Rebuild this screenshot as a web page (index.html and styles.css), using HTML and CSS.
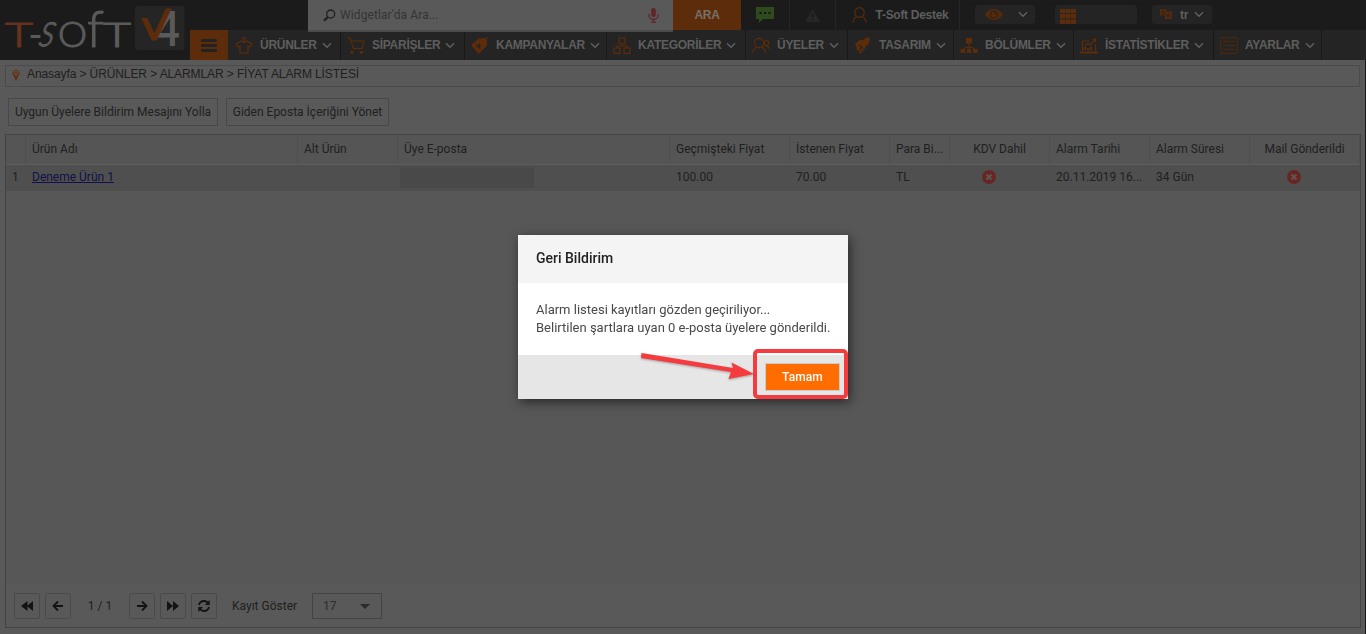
FILE: index.html
```html
<!DOCTYPE html>
<html lang="tr">
<head>
<meta charset="utf-8">
<title>Fiyat Alarm Listesi</title>
<link rel="stylesheet" href="styles.css">
</head>
<body>
<svg class="defs" width="0" height="0" aria-hidden="true">
  <symbol id="chev" viewBox="0 0 10 7"><path d="M1 1.3 5 5.3 9 1.3" fill="none" stroke="#606060" stroke-width="1.4"/></symbol>
  <symbol id="fail" viewBox="0 0 14 14"><circle cx="7" cy="7" r="6.9" fill="#682521"/><path d="M4.5 4.5 9.5 9.5M9.5 4.5 4.5 9.5" stroke="#5b5654" stroke-width="2.3"/></symbol>
</svg>
<header class="header">
  <div class="brand">
    <svg class="logo" width="190" height="60" viewBox="0 0 190 60">
      <g class="word">
        <text x="5" y="47" textLength="28" lengthAdjust="spacingAndGlyphs" font-size="34" class="warm">T</text>
        <text x="29" y="47" font-size="35" textLength="13" lengthAdjust="spacingAndGlyphs" class="dash">-</text>
        <text x="48" y="46.500" font-size="47" textLength="15" lengthAdjust="spacingAndGlyphs" font-style="italic" transform="skewX(-12)">s</text>
        <text x="58" y="47" font-size="35" textLength="29" lengthAdjust="spacingAndGlyphs">O</text>
        <text x="87" y="47" font-size="51" textLength="17" lengthAdjust="spacingAndGlyphs">f</text>
        <text x="103" y="47" font-size="34" textLength="28" lengthAdjust="spacingAndGlyphs">T</text>
      </g>
      <rect x="135" y="6" width="49.500" height="44" rx="3" fill="#252525"/>
      <clipPath id="tick"><path d="M135 18h19V6h30v44h-49z"/></clipPath>
      <g class="mark">
        <text x="154" y="45.500" font-size="48" textLength="26" lengthAdjust="spacingAndGlyphs">4</text>
        <text x="137" y="40" font-size="42" textLength="34" lengthAdjust="spacingAndGlyphs" class="warm2" clip-path="url(#tick)">V</text>
      </g>
    </svg>
    <div class="burger"><i></i><i></i><i></i></div>
  </div>
  <div class="bars">
    <div class="topbar">
      <div class="search">
        <svg width="13" height="13" viewBox="0 0 13 13"><circle cx="7.700" cy="5" r="4" fill="none" stroke="#202020" stroke-width="1.300"/><path d="M4.800 8 1 11.800" stroke="#202020" stroke-width="2.200"/></svg>
        <span>Widgetlar'da Ara...</span>
        <svg width="11" height="15" viewBox="0 0 11 15"><rect x="3.200" width="4.600" height="9" rx="2.300" fill="#5f2527"/><path d="M1 6v1.500a4.500 3.800 0 0 0 9 0V6M5.500 11.300V14M3 14.200h5" fill="none" stroke="#5f2527" stroke-width="1.200"/></svg>
      </div>
      <div class="go">ARA</div>
      <div class="cell chat"><svg width="18" height="16" viewBox="0 0 18 16"><path d="M0 0h18v12H7l-4 4v-4H0z" fill="#2f4a1f"/><path d="M3.500 6h2M8 6h2M12.500 6h2" stroke="#111" stroke-width="2"/></svg></div>
      <div class="cell warn"><svg width="15" height="13" viewBox="0 0 15 13"><path d="M7.500 0 15 13H0z" fill="#272727"/><path d="M7.500 4v4.500M7.500 9.700v1.800" stroke="#1b1b1b" stroke-width="1.700"/></svg></div>
      <div class="cell user"><svg width="15" height="16" viewBox="0 0 15 16" fill="none" stroke="#5c2c0b" stroke-width="1.200"><circle cx="7.500" cy="5.500" r="4.800"/><path d="M1 15.500c.2-3.300 1.700-5 4-5.700M14 15.500c-.2-3.300-1.700-5-4-5.700"/></svg><b>T-Soft Destek</b></div>
      <div class="pill eye"><svg width="18" height="11" viewBox="0 0 18 11"><path d="M0 5.500C5-1.800 13-1.800 18 5.500 13 12.800 5 12.800 0 5.500z" fill="#56290b"/><circle cx="9" cy="5.500" r="3.600" fill="none" stroke="#222" stroke-width="1"/><path d="M9 3.500a2 2 0 0 1 2 2" stroke="#222" fill="none"/></svg><svg width="10" height="7"><use href="#chev"/></svg></div>
      <div class="pill grid"><svg width="16" height="15" viewBox="0 0 16 15" fill="#5c2c0b"><path d="M0 0h5v4H0zM5.500 0h5v4h-5zM11 0h5v4h-5zM0 5h5v4.500H0zM5.500 5h5v4.500h-5zM11 5h5v4.500h-5zM0 10.500h5V15H0zM5.500 10.500h5V15h-5zM11 10.500h5V15h-5z"/></svg></div>
      <div class="pill lang"><svg width="12" height="11" viewBox="0 0 12 11"><path d="M0 0h6.500v2.500H12V10H5V6.500H0z" fill="#56290b"/><path d="M2 1.700h2M2 3.200h2M2 4.800h2M7 8.300l1.500-4 1.500 4M7.500 7h2M5 2.500v4" fill="none" stroke="#242424" stroke-width=".8"/></svg><b>tr</b><svg width="10" height="7"><use href="#chev"/></svg></div>
    </div>
    <nav class="nav">
      <a><svg viewBox="0 0 18 17"><path d="M6 4 1 7l1.500 3L5 9v7h8V9l2.500 1L17 7l-5-3-3 1.500L6 4zM9 5V3.300C11 2.500 10.500.7 9 .7S7.500 1.700 7.500 2"/></svg><span>ÜRÜNLER</span><svg class="c"><use href="#chev"/></svg></a>
      <a><svg viewBox="0 0 18 17"><path d="M0 1h3l3.500 10.500H15L17 4H5"/><circle class="f" cx="5" cy="15.300" r="1.600"/><circle class="f" cx="14.500" cy="15.300" r="1.600"/></svg><span>SİPARİŞLER</span><svg class="c"><use href="#chev"/></svg></a>
      <a><svg viewBox="0 0 18 17"><path class="f" d="M0 8 7.500 1.500 14 1l2 2-.2 6L7.500 16.700z"/><path d="M12 5c1-3 3-4 5.500-4.500"/><path class="k" d="m5.500 7.500 4 4M8.500 6.500v5M5.500 10l4-2"/></svg><span>KAMPANYALAR</span><svg class="c"><use href="#chev"/></svg></a>
      <a><svg viewBox="0 0 18 17"><path d="M6 1h6v5.500H6zM1 11h6v5.300H1zM11 11h6v5.300h-6zM9 6.500V9M4 11V9h10v2"/></svg><span>KATEGORİLER</span><svg class="c"><use href="#chev"/></svg></a>
      <a><svg viewBox="0 0 18 17"><circle cx="7" cy="6" r="4.700"/><path d="M.7 15.500c.2-3 1.700-4.500 3.500-5.200M13.500 15.500c-.2-3-1.700-4.500-3.500-5.200"/><circle cx="14.500" cy="6" r="2.300"/><path d="M14 9.500c2-.5 3.300.7 3.500 2.500"/></svg><span>ÜYELER</span><svg class="c"><use href="#chev"/></svg></a>
      <a><svg viewBox="0 0 18 17"><path class="f" d="M1 7 6 2.500l2.500 1L13 0l3 1-1 5-3 3-1 2.500-5 5.500-1-3.500L2 13l1-2z"/><path class="k" d="m5 8 4 3.500M5.500 11l2 2.500"/></svg><span>TASARIM</span><svg class="c"><use href="#chev"/></svg></a>
      <a><svg viewBox="0 0 18 17"><path class="f" d="M6 1h6v5.500H6zM.5 12h4.500v4H.5zM6.800 12h4.500v4H6.800zM13 12h4.500v4H13z"/><path d="M9 6v6M3 12.500 6 10.500h6l3 2"/></svg><span>BÖLÜMLER</span><svg class="c"><use href="#chev"/></svg></a>
      <a><svg viewBox="0 0 18 17"><path d="M2.500 14V4h7M15.500 7v7M5 9l3-3 2 2 5-5M12.500 2.500 15.500 2v3"/><path class="f" d="M4 13v-3h2v3zM7 13v-2h2v3zM10 13V9.500h2V13zM0 14.500h18v2H0z"/></svg><span>İSTATİSTİKLER</span><svg class="c"><use href="#chev"/></svg></a>
      <a class="dim"><svg viewBox="0 0 18 17"><rect x=".7" y=".7" width="16.500" height="15.700" rx="1"/><path d="M3 4.500h12M3 8.500h12M3 12.500h12M6 3v3M12 7v3M6 11v3"/></svg><span>AYARLAR</span><svg class="c"><use href="#chev"/></svg></a>
    </nav>
  </div>
</header>
<main class="page">
  <div class="crumbs"><svg width="8" height="13" viewBox="0 0 8 13"><path d="M4 12.500 1.800 7a3.500 3.500 0 1 1 4.400 0z" fill="#65300f"/><circle cx="4" cy="4" r="2.200" fill="#595959"/><circle cx="4" cy="4" r="1.100" fill="#65300f"/></svg><span>Anasayfa &gt; ÜRÜNLER &gt; ALARMLAR &gt; FİYAT ALARM LİSTESİ</span></div>
  <div class="actions"><button class="b1">Uygun Üyelere Bildirim Mesajını Yolla</button><button class="b2">Giden Eposta İçeriğini Yönet</button></div>
  <section class="panel">
    <div class="row head"><span></span><span>Ürün Adı</span><span>Alt Ürün</span><span>Üye E-posta</span><span>Geçmişteki Fiyat</span><span>İstenen Fiyat</span><span>Para Bi...</span><span class="mid">KDV Dahil</span><span>Alarm Tarihi</span><span>Alarm Süresi</span><span class="mid">Mail Gönderildi</span></div>
    <div class="row data"><span>1</span><span><a class="link">Deneme Ürün 1</a></span><span></span><span class="mail"><i class="redacted"></i></span><span>100.00</span><span>70.00</span><span>TL</span><span class="x1"><svg width="14" height="14"><use href="#fail"/></svg></span><span>20.11.2019 16...</span><span>34 Gün</span><span class="x2"><svg width="14" height="14"><use href="#fail"/></svg></span></div>
    <div class="space"></div>
    <footer class="pager">
      <button><svg viewBox="0 0 14 12"><path class="f" d="M7.500 1v10L1 6zM13 1v10L7 6z"/></svg></button>
      <button><svg viewBox="0 0 14 12"><path d="M12 6H3M7 1.500 2.500 6 7 10.500"/></svg></button>
      <span class="num">1 / 1</span>
      <button><svg viewBox="0 0 14 12"><path d="M2 6h9M7 1.500 11.500 6 7 10.500"/></svg></button>
      <button><svg viewBox="0 0 14 12"><path class="f" d="M1 1v10l6-5zM7 1v10l6-5z"/></svg></button>
      <button><svg viewBox="0 0 14 12"><path d="M2 5c.6-2.500 2.500-4 5-4 1.700 0 3 .7 4 2M12 7c-.6 2.500-2.500 4-5 4-1.700 0-3-.7-4-2"/><path class="f" d="M12.700 0v5H8zM1.300 12V7H6z"/></svg></button>
      <span class="show">Kayıt Göster</span>
      <div class="select"><span>17</span><i></i></div>
    </footer>
  </section>
</main>
<div class="overlay">
  <div class="dialog">
    <h1>Geri Bildirim</h1>
    <div class="msg">Alarm listesi kayıtları gözden geçiriliyor...<br>Belirtilen şartlara uyan 0 e-posta üyelere gönderildi.</div>
    <div class="foot"><div class="focus"><button>Tamam</button></div></div>
    <svg class="arrow" width="120" height="34" viewBox="0 0 120 34"><path d="M3.500 5 3 10 93 24 90.500 31 116 26 93.500 14.500 95 20Z" fill="#f53b3d"/></svg>
  </div>
</div>
</body>
</html>
```
FILE: styles.css
```css
* { box-sizing: border-box; }
body { margin: 0; height: 634px; overflow: hidden; background: #595959; font: 12px Roboto, sans-serif; color: #202020; display: flex; flex-direction: column; }
.defs { position: absolute; }
svg { display: block; flex: none; }
button { font: inherit; color: inherit; background: none; padding: 0; }

.header { display: flex; height: 60px; flex: none; background: #1b1b1b; }
.brand { width: 228px; display: flex; align-items: flex-end; }
.word { font-family: Lato, sans-serif; font-weight: 300; fill: #5a5a5a; stroke: #5a5a5a; stroke-width: 1.1; stroke-linejoin: round; }
.word .warm { fill: #65321e; stroke: #65321e; }
.word .dash { stroke-width: 1.6; }
.mark { font-family: Lato, sans-serif; font-weight: 700; fill: #5a5a5a; }
.mark .warm2 { fill: #5c2c0b; font-weight: 400; stroke: #5c2c0b; stroke-width: .8; }
.burger { width: 38px; height: 30px; background: #5c2c0b; display: flex; flex-direction: column; align-items: center; justify-content: center; gap: 2px; }
.burger i { width: 16px; height: 3px; background: #222; border-radius: 1px; }
.bars { flex: 1; display: flex; flex-direction: column; font-family: "Liberation Sans", sans-serif; color: #5e5e5e; }
.bars b { font-size: 12px; letter-spacing: -.3px; }
.topbar { height: 30px; flex: none; display: flex; padding-left: 80px; }
.search { width: 365px; height: 32px; z-index: 1; background: #595959; border-bottom: 2px solid #4b4b4b; display: flex; align-items: center; padding: 0 14px 0 15px; color: #343434; font: 12px Roboto, sans-serif; }
.search span { flex: 1; padding-left: 4px; letter-spacing: .1px; }
.go { width: 68px; background: #5c2c0b; color: #777069; font-weight: bold; text-align: center; line-height: 30px; letter-spacing: -.3px; }
.cell { border-right: 1px solid #262626; display: flex; align-items: center; justify-content: center; }
.chat { width: 49px; }
.warn { width: 46px; }
.user { width: 124px; gap: 9px; padding-left: 5px; }
.pill { height: 19px; margin-top: 5px; border-radius: 3px; background: #242424; display: flex; align-items: center; }
.eye { width: 60px; margin-left: 15px; padding: 0 7px 0 10px; justify-content: space-between; }
.grid { width: 82px; margin-left: 20px; padding: 4px 0 0 5px; }
.lang { width: 60px; margin-left: 15px; padding-left: 8px; gap: 6px; }
.lang b { padding-left: 2px; }
.nav { height: 30px; background: #242424; display: grid; grid-template-columns: 113px 124px 142px 139px 102px 106px 120px 140px 108px; }
.nav a { display: flex; align-items: center; padding-left: 6px; border-right: 1px solid #181818; white-space: nowrap; font-weight: bold; letter-spacing: -.28px; }
.nav a:first-child { padding-left: 7px; }
.nav svg { width: 18px; height: 17px; fill: none; stroke: #5c2c0b; stroke-width: 1.2; }
.nav .f { fill: #5c2c0b; stroke: none; }
.nav .k { stroke: #242424; }
.nav .dim svg:first-child { stroke: #48270f; }
.nav span { margin: 0 5px 0 7px; }
.nav .c { width: 10px; height: 7px; stroke: none; }

.page { flex: 1; min-height: 0; display: flex; flex-direction: column; padding: 5px 5px 6px; border-right: 1px solid #171717; }
.crumbs { height: 22px; flex: none; border: 1px solid #4b4b4b; display: flex; align-items: center; gap: 7px; padding: 0 6px 4px; font-family: "Liberation Sans", sans-serif; letter-spacing: -.1px; }
.crumbs svg { margin-top: 3px; }
.actions { display: flex; gap: 8px; padding: 11px 3px 8px; }
.actions button { height: 28px; border: 1px solid #484848; white-space: nowrap; }
.b1 { width: 210px; }
.b2 { width: 163px; }
.panel { flex: 1; display: flex; flex-direction: column; border: 1px solid #444; background: #595959; margin-right: -1px; width: 1356px; }
.row { display: grid; grid-template-columns: 20px 272px 100px 272px 120px 100px 60px 100px 100px 100px 1fr; flex: none; }
.row span { padding-left: 6px; display: flex; align-items: center; white-space: nowrap; }
.head { height: 30px; background: #555; border-bottom: 1px solid #5d5d5d; }
.head span { border-right: 1px solid #4f4f4f; padding-bottom: 1px; }
.row .mid { justify-content: center; padding-left: 0; }
.data { height: 26px; background: #4f4f4f; padding-bottom: 2px; }
.link { color: #10104a; text-decoration: underline; }
.row .mail { padding-left: 2px; }
.redacted { width: 134px; height: 21px; background: #494949; margin-top: 1px; }
.row .x1 { padding: 0 0 0 32px; }
.row .x2 { padding: 0 0 0 37px; }
.space { flex: 1; background: #575757; }
.pager { height: 43px; display: flex; align-items: flex-start; padding: 9px 8px 0; }
.pager button { width: 26px; height: 26px; border: 1px solid #4a4a4a; border-radius: 2px; margin-right: 5px; display: grid; place-items: center; }
.pager svg { width: 14px; height: 12px; fill: none; stroke: #131313; stroke-width: 1.8; }
.pager .f { fill: #131313; stroke: none; }
.pager span { line-height: 26px; }
.pager .num { width: 53px; text-align: center; padding-right: 5px; }
.show { padding-left: 10px; width: 90px; }
.select { width: 70px; height: 26px; border: 1px solid #434343; display: flex; justify-content: space-between; padding: 0 11px 0 10px; align-items: center; color: #2b2b2b; }
.select i { border: 5px solid transparent; border-top-color: #2b2b2b; border-bottom: 0; }

.overlay { position: fixed; inset: 0; display: grid; place-items: center; }
.dialog { position: relative; width: 330px; height: 164px; background: #fff; box-shadow: 2px 3px 10px rgba(0,0,0,.55); display: flex; flex-direction: column; }
.dialog h1 { margin: 0; height: 48px; background: #f4f4f4; font-size: 14px; font-weight: 500; line-height: 47px; padding-left: 18px; color: #222; }
.msg { height: 72px; padding: 18px 0 0 18px; font-size: 13px; line-height: 18px; white-space: nowrap; color: #484848; }
.foot { flex: 1; background: #e6e6e6; display: flex; justify-content: flex-end; }
.focus { width: 95px; height: 50px; margin-top: -6px; border: 4px solid #f53b3d; border-radius: 5px; display: flex; justify-content: flex-end; padding: 10px 4px 0 0; background: linear-gradient(#fff 2px, #e6e6e6 2px); }
.focus button { width: 75px; height: 28px; border: 1px solid #ccc; background: #ff6c00; color: #fff; font-weight: 500; letter-spacing: .1px; }
.arrow { position: absolute; left: 120px; top: 113px; filter: drop-shadow(0 1px 1px rgba(0,0,0,.3)); }
```
